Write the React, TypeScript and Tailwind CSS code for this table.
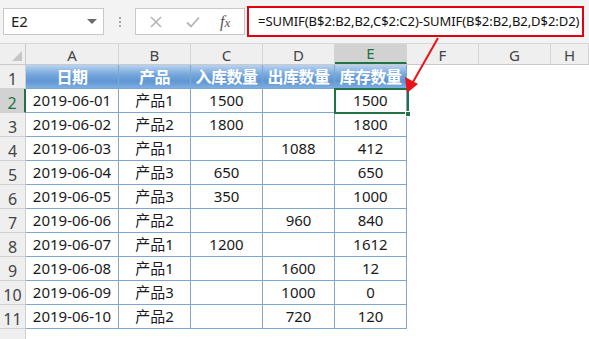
import React from "react";

const rows: string[][] = [
  ["2019-06-01", "产品1", "1500", "", "1500"],
  ["2019-06-02", "产品2", "1800", "", "1800"],
  ["2019-06-03", "产品1", "", "1088", "412"],
  ["2019-06-04", "产品3", "650", "", "650"],
  ["2019-06-05", "产品3", "350", "", "1000"],
  ["2019-06-06", "产品2", "", "960", "840"],
  ["2019-06-07", "产品1", "1200", "", "1612"],
  ["2019-06-08", "产品1", "", "1600", "12"],
  ["2019-06-09", "产品3", "", "1000", "0"],
  ["2019-06-10", "产品2", "", "720", "120"],
];

const headers = ["日期", "产品", "入库数量", "出库数量", "库存数量"];
const colW = ["w-[93px]", "w-[72px]", "w-[72px]", "w-[72px]", "w-[72px]"];
const letters = ["A", "B", "C", "D", "E", "F", "G", "H"];
const letterW = ["w-[93px]", "w-[72px]", "w-[72px]", "w-[72px]", "w-[72px]", "w-[72px]", "w-[72px]", "w-[38px]"];

const font = { fontFamily: '"Noto Sans", "Noto Sans CJK SC", sans-serif' };

export default function App() {
  return (
    <div className="relative w-[589px] h-[339px] overflow-hidden bg-white text-[#222]" style={font}>
      {/* toolbar */}
      <div className="h-[44px] bg-[#f3f3f3] flex items-center pl-[3px] border-b border-[#d6d6d6]">
        <div className="w-[101px] h-[27px] bg-white border border-[#c8c8c8] flex items-center justify-between pl-[7px] pr-[6px]">
          <span className="text-[15px] text-[#222]">E2</span>
          <svg width="10" height="6" viewBox="0 0 10 6"><path d="M0 0 L10 0 L5 5 Z" fill="#6b6b6b" /></svg>
        </div>
        <div className="w-[31px] flex flex-col items-center gap-[2px]">
          <span className="w-[2px] h-[2px] bg-[#a8a8a8]" />
          <span className="w-[2px] h-[2px] bg-[#a8a8a8]" />
          <span className="w-[2px] h-[2px] bg-[#a8a8a8]" />
        </div>
        <div className="w-[110px] h-[27px] bg-white border border-[#c8c8c8] flex items-center">
          <svg className="ml-[14px]" width="12" height="12" viewBox="0 0 12 12"><path d="M1 1 L11 11 M11 1 L1 11" stroke="#b5b5b5" strokeWidth="1.6" /></svg>
          <svg className="ml-[24px]" width="14" height="12" viewBox="0 0 14 12"><path d="M1 6.5 L5 10.5 L13 1.5" stroke="#b5b5b5" strokeWidth="1.8" fill="none" /></svg>
          <span className="ml-[20px] text-[16px] italic text-[#555]" style={{ fontFamily: '"Liberation Serif", serif' }}>f<span className="text-[13px]">x</span></span>
        </div>
        <div className="ml-[2px] w-[337px] h-[31px] border-[2.5px] border-[#e3000f] bg-white flex items-center pl-[9px] overflow-hidden">
          <span className="text-[13px] tracking-[-0.05px] text-[#111] whitespace-nowrap">=SUMIF(B$2:B2,B2,C$2:C2)-SUMIF(B$2:B2,B2,D$2:D2)</span>
        </div>
      </div>

      {/* column header row */}
      <div className="flex h-[21px] bg-[#efefef] border-b border-[#c9c9c9]">
        <div className="w-[26px] shrink-0 border-r border-[#c9c9c9] relative">
          <svg className="absolute right-[3px] bottom-[3px]" width="10" height="10" viewBox="0 0 10 10"><path d="M10 0 L10 10 L0 10 Z" fill="#c6c6c6" /></svg>
        </div>
        {letters.map((l, i) => (
          <div
            key={l}
            className={`${letterW[i]} shrink-0 flex items-end justify-center pb-[1px] text-[15px] leading-none border-r border-[#d4d4d4] ${
              l === "E" ? "bg-[#d2d2d2] text-[#217346] border-b-2 border-b-[#217346]" : "text-[#444]"
            }`}
          >
            {l}
          </div>
        ))}
      </div>

      {/* body */}
      <div className="flex flex-col">
        {/* header row 1 */}
        <div className="flex h-[24px]">
          <div className="w-[26px] shrink-0 bg-[#efefef] border-r border-b border-[#d0d0d0] flex items-end justify-center pb-[1px] text-[16px] leading-none text-[#444]">1</div>
          {headers.map((h, i) => (
            <div
              key={h}
              className={`${colW[i]} shrink-0 flex items-center justify-center text-white font-bold text-[16px] tracking-[-0.5px] border-r border-b border-[#7ba7d0] bg-[linear-gradient(to_bottom,#b9d3f0_0%,#77a8dd_40%,#5f96d3_70%,#7eaee2_100%)]`}
            >
              {h}
            </div>
          ))}
        </div>
        {rows.map((r, ri) => {
          const sel = ri === 0;
          return (
            <div key={ri} className="flex h-[24px]">
              <div
                className={`w-[26px] shrink-0 border-b border-[#d0d0d0] flex items-end justify-center pb-[1px] text-[16px] leading-none ${
                  sel ? "bg-[#d2d2d2] text-[#217346] border-r-2 border-r-[#217346]" : "bg-[#efefef] text-[#444] border-r border-r-[#d0d0d0]"
                }`}
              >
                {ri + 2}
              </div>
              {r.map((c, ci) => (
                <div
                  key={ci}
                  className={`${colW[ci]} shrink-0 flex items-center justify-center text-[15px] text-[#1a1a1a] border-r border-b border-[#7ba7d0]`}
                >
                  {c}
                </div>
              ))}
            </div>
          );
        })}
        {/* row 12 partial */}
        <div className="flex h-[20px]">
          <div className="w-[26px] shrink-0 bg-[#efefef] border-r border-[#d0d0d0]" />
        </div>
      </div>

      {/* selection E2 */}
      <div className="absolute left-[334px] top-[88px] w-[75px] h-[26px] border-2 border-[#217346] pointer-events-none" />
      <div className="absolute left-[405px] top-[111px] w-[6px] h-[6px] bg-[#217346] border border-white" />

      {/* arrow */}
      <svg className="absolute left-0 top-0 pointer-events-none" width="589" height="339">
        <line x1="438" y1="38" x2="413" y2="82" stroke="#e8141a" strokeWidth="2" />
        <path d="M407 93 L405 77 L418 84 Z" fill="#e8141a" />
      </svg>
    </div>
  );
}
